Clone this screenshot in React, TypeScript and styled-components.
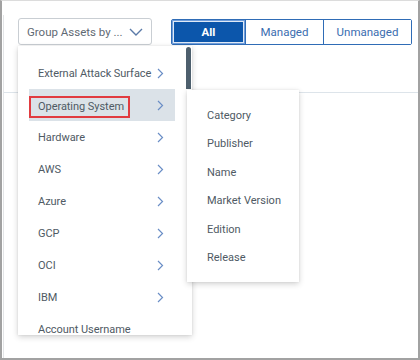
import React from "react";
import styled, { createGlobalStyle } from "styled-components";

const Global = createGlobalStyle`
  html, body { margin: 0; padding: 0; background: #ffffff; }
  * { box-sizing: border-box; }
  body { font-family: Roboto, "Liberation Sans", Arial, sans-serif; }
`;

const Frame = styled.div`
  width: 420px;
  height: 360px;
  border: 2px solid #a2a2a2;
  border-top: 1px solid #dcdcdc;
  background: #fff;
  display: flex;
  flex-direction: column;
  overflow: hidden;
`;

const Page = styled.div`
  flex: 1;
  margin-top: 14px;
  margin-left: 1px;
  border-left: 1px solid #e3e5e7;
  display: flex;
  flex-direction: column;
`;

const Header = styled.div`
  height: 78px;
  border-bottom: 1px solid #dde4ea;
  display: flex;
  align-items: flex-start;
  padding: 3px 0 0 14px;
  gap: 19px;
`;

const Body = styled.div`
  flex: 1;
`;

const DropdownWrap = styled.div`
  position: relative;
  z-index: 5;
`;

const SelectButton = styled.button`
  width: 134px;
  height: 27px;
  border: 1px solid #c9ced3;
  border-radius: 3px;
  background: #fff;
  display: flex;
  align-items: center;
  justify-content: space-between;
  padding: 0 8px 0 8px;
  font-family: Roboto, "Liberation Sans", Arial, sans-serif;
  font-size: 11.5px;
  color: #5f6a74;
  white-space: nowrap;
  cursor: pointer;
`;

const Menu = styled.div`
  position: absolute;
  top: 28px;
  left: 0;
  width: 174px;
  height: 289px;
  background: #fff;
  box-shadow: 0 2px 6px rgba(0, 0, 0, 0.18), 0 0 2px rgba(0, 0, 0, 0.08);
  padding: 11px 17px 0 11px;
  overflow: hidden;
`;

const ScrollThumb = styled.div`
  position: absolute;
  top: 1px;
  right: 1px;
  width: 5px;
  height: 42px;
  border-radius: 3px 3px 0 0;
  background: #4d5f6d;
`;

const MenuRow = styled.div<{ $active?: boolean }>`
  height: 32px;
  display: flex;
  align-items: center;
  justify-content: space-between;
  padding: 0 11px 0 9px;
  background: ${(p) => (p.$active ? "#dbe2e8" : "transparent")};
  font-size: 11px;
  letter-spacing: -0.05px;
  color: #4f5a64;
  white-space: nowrap;
`;

const Label = styled.span<{ $annotated?: boolean }>`
  ${(p) =>
    p.$annotated
      ? `
    margin-left: -9px;
    width: 101px;
    height: 22px;
    margin-top: 3px;
    padding-left: 7px;
    display: flex;
    align-items: center;
    border: 2px solid #e13b40;
  `
      : ""}
`;

const SubMenu = styled.div`
  position: absolute;
  top: 72px;
  left: 169px;
  width: 112px;
  height: 192px;
  background: #fff;
  box-shadow: 0 2px 6px rgba(0, 0, 0, 0.18), 0 0 2px rgba(0, 0, 0, 0.08);
  padding-top: 11px;
  z-index: 2;
`;

const SubRow = styled.div`
  height: 28.5px;
  display: flex;
  align-items: center;
  padding-left: 20px;
  font-size: 11px;
  color: #4f5a64;
  white-space: nowrap;
`;

const Toggle = styled.div`
  display: flex;
  height: 26px;
  margin-top: 1px;
  border: 1px solid #2f6cb6;
  border-radius: 2px;
`;

const ToggleButton = styled.button<{ $w: number; $active?: boolean }>`
  width: ${(p) => p.$w}px;
  height: 100%;
  border: none;
  border-left: 1px solid #2f6cb6;
  &:first-child { border-left: none; }
  background: ${(p) => (p.$active ? "#0c56ab" : "#fff")};
  color: ${(p) => (p.$active ? "#ffffff" : "#3a6db0")};
  box-shadow: ${(p) =>
    p.$active ? "inset 0 0 0 1px #6f9ddb, inset 0 0 0 2px #dfe9f6" : "none"};
  font-family: Roboto, "Liberation Sans", Arial, sans-serif;
  font-size: 11.5px;
  font-weight: ${(p) => (p.$active ? 700 : 400)};
  padding: 0;
  cursor: pointer;
`;

const Chevron = () => (
  <svg width="7" height="11" viewBox="0 0 7 11">
    <path d="M1 1 L5.5 5.5 L1 10" fill="none" stroke="#6a8ec6" strokeWidth="1.2" />
  </svg>
);

const ChevronDown = () => (
  <svg width="14" height="8" viewBox="0 0 14 8">
    <path d="M1 1 L7 7 L13 1" fill="none" stroke="#5a7aa8" strokeWidth="1.4" />
  </svg>
);

const groups = [
  { label: "External Attack Surface", sub: true },
  { label: "Operating System", sub: true, active: true },
  { label: "Hardware", sub: true },
  { label: "AWS", sub: true },
  { label: "Azure", sub: true },
  { label: "GCP", sub: true },
  { label: "OCI", sub: true },
  { label: "IBM", sub: true },
  { label: "Account Username", sub: false },
];

const subItems = ["Category", "Publisher", "Name", "Market Version", "Edition", "Release"];

export default function App() {
  return (
    <>
      <Global />
      <Frame>
        <Page>
          <Header>
            <DropdownWrap>
              <SelectButton>
                <span>Group Assets by ...</span>
                <ChevronDown />
              </SelectButton>
              <Menu>
                <ScrollThumb />
                {groups.map((g) => (
                  <MenuRow key={g.label} $active={g.active}>
                    <Label $annotated={g.active}>{g.label}</Label>
                    {g.sub && <Chevron />}
                  </MenuRow>
                ))}
              </Menu>
              <SubMenu>
                {subItems.map((s) => (
                  <SubRow key={s}>{s}</SubRow>
                ))}
              </SubMenu>
            </DropdownWrap>
            <Toggle>
              <ToggleButton $w={73} $active>
                All
              </ToggleButton>
              <ToggleButton $w={78}>Managed</ToggleButton>
              <ToggleButton $w={88}>Unmanaged</ToggleButton>
            </Toggle>
          </Header>
          <Body />
        </Page>
      </Frame>
    </>
  );
}
